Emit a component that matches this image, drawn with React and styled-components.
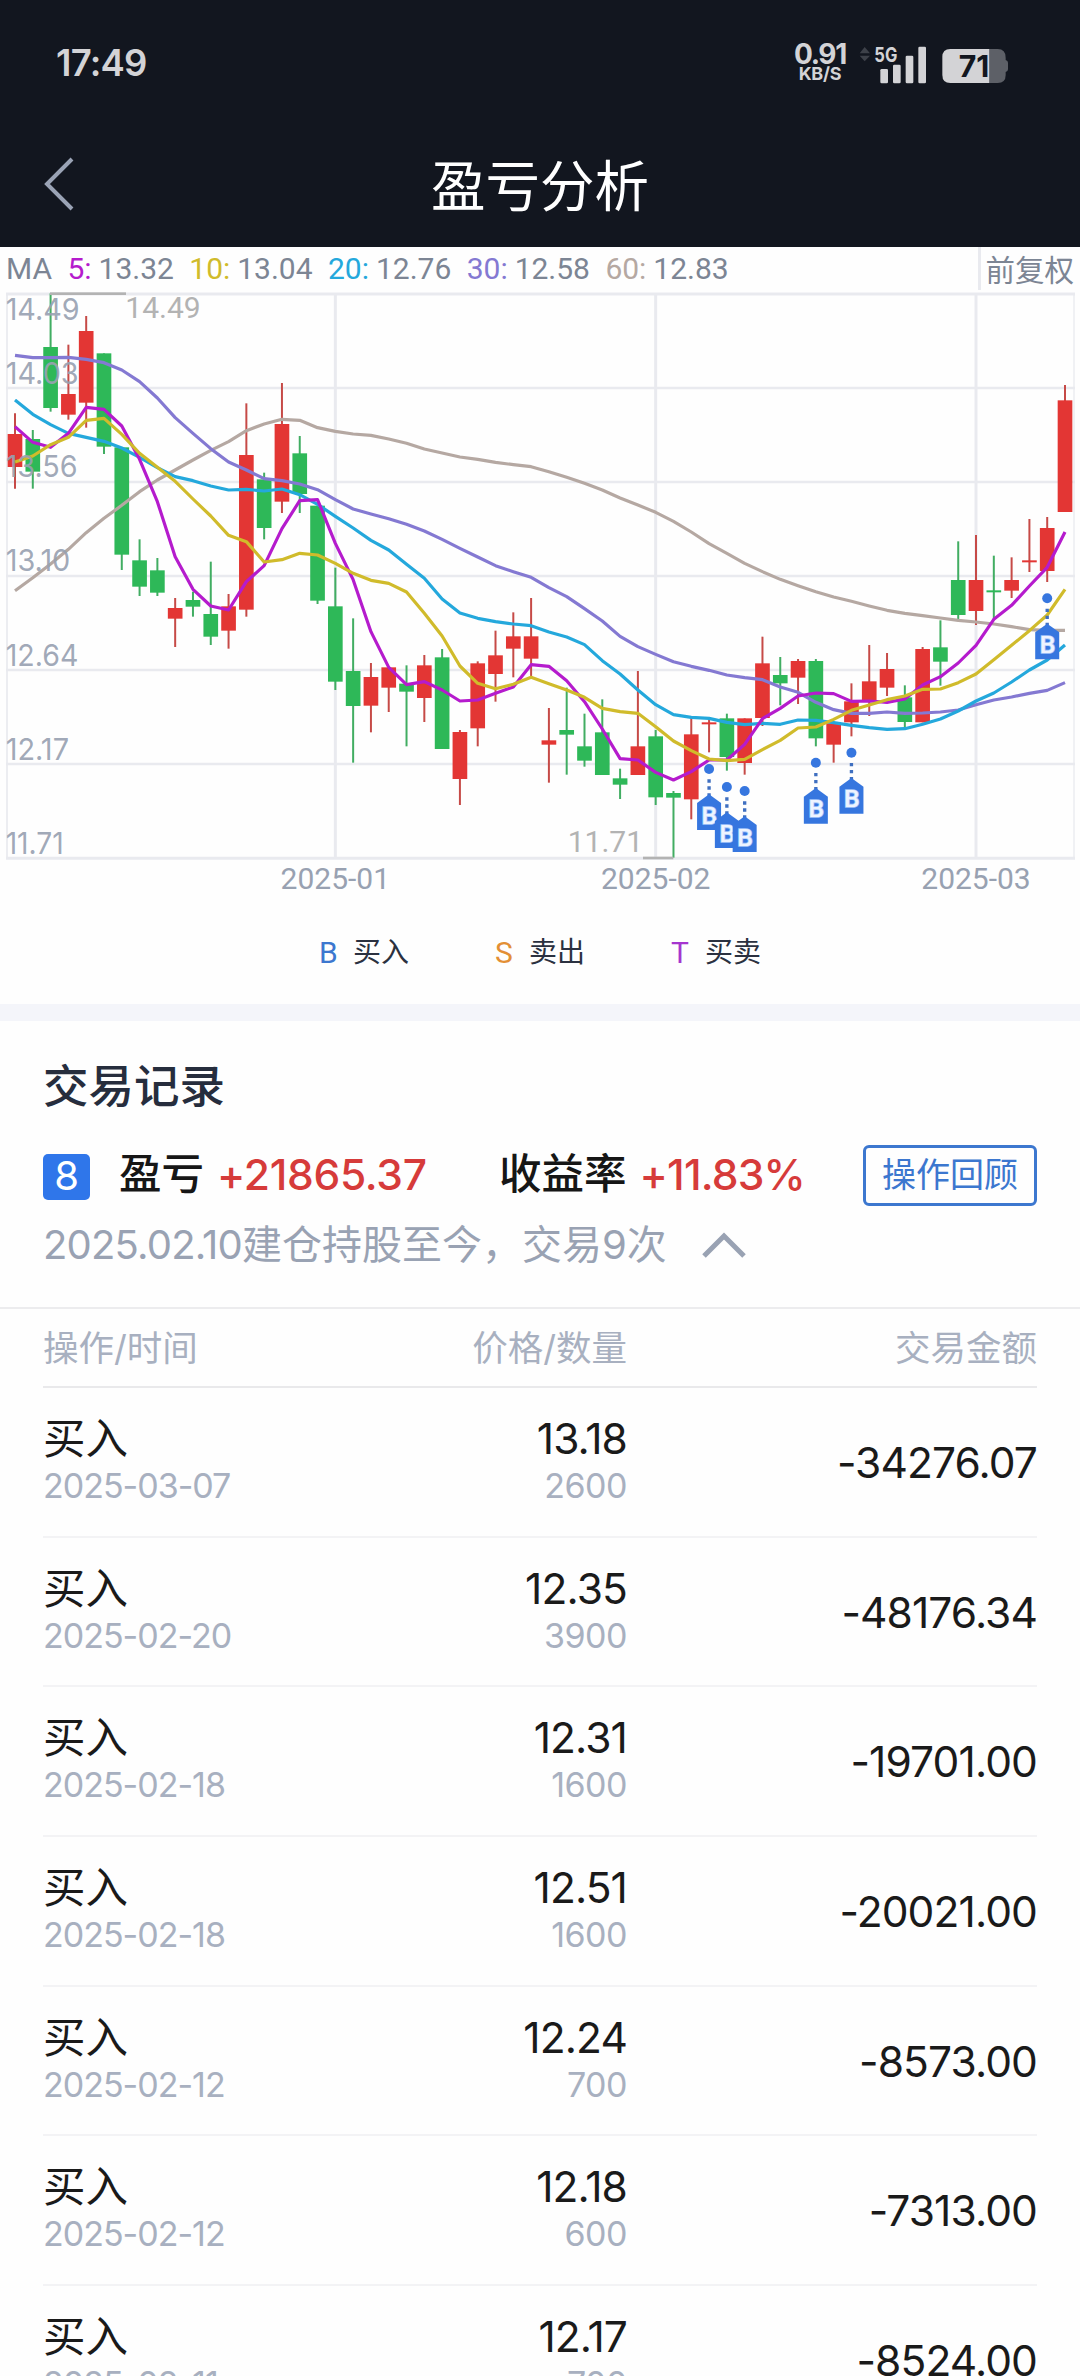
import React from 'react';
import styled, { createGlobalStyle } from 'styled-components';

const GlobalStyle = createGlobalStyle`
  * {
    box-sizing: border-box;
  }

  body {
    margin: 0;
    width: 1080px;
    height: 2376px;
    overflow: hidden;
    background: #fefefe;
    font-family: Inter, 'Noto Sans CJK SC', sans-serif;
  }
`;

const Screen = styled.div`
  width: 1080px;
  height: 2376px;
  overflow: hidden;
  display: flex;
  flex-direction: column;
`;

const Header = styled.header`
  flex: none;
  height: 247px;
  background: #12161f;
`;

const StatusBar = styled.div`
  height: 125px;
  padding: 0 71px 0 56px;
  display: flex;
  align-items: center;
  justify-content: space-between;
`;

const Clock = styled.div`
  font-size: 36.5px;
  font-weight: 600;
  letter-spacing: -0.8px;
  color: #d3d3d6;
`;

const StatusRight = styled.div`
  display: flex;
  align-items: center;
  gap: 12px;
`;

const NetSpeed = styled.div`
  display: flex;
  flex-direction: column;
  align-items: center;
  font-weight: 700;
  color: #d3d3d6;
`;

const SpeedValue = styled.span`
  font-size: 28px;
  line-height: 22px;
  letter-spacing: -1.3px;
`;

const SpeedUnit = styled.span`
  font-size: 18px;
  line-height: 18px;
  letter-spacing: -0.3px;
`;

const NavBar = styled.div`
  height: 122px;
  padding: 0 42px;
  display: grid;
  grid-template-columns: 60px 1fr 60px;
  align-items: center;
`;

const BackIcon = styled.svg`
  width: 34px;
  height: 56px;
  margin-bottom: 5px;
`;

const NavTitle = styled.h1`
  margin: 0;
  font-size: 54.5px;
  font-weight: 400;
  line-height: 60px;
  text-align: center;
  color: #ffffff;
`;

const AverageBar = styled.div`
  flex: none;
  height: 43px;
  padding-left: 6px;
  display: flex;
  align-items: center;
  font-family: Roboto, sans-serif;
  font-size: 30px;
  line-height: 45px;
  word-spacing: -0.5px;
  color: #7c8594;
`;

const AverageItem = styled.span`
  margin-left: 15.4px;
  white-space: pre;
`;

const AverageLabel = styled.span`
  color: ${(props) => props.$color};
`;

const AdjustMode = styled.span`
  height: 43px;
  margin-left: auto;
  padding: 0 6px 0 4px;
  border-left: 3px solid #e9eaef;
  font-family: 'Noto Sans CJK SC', sans-serif;
  font-size: 29.5px;
  line-height: 43px;
`;

const ChartSvg = styled.svg`
  flex: none;
  display: block;
  width: 1080px;
  height: 610px;
`;

const Legend = styled.div`
  flex: none;
  height: 104px;
  padding-left: 319px;
  display: flex;
  align-items: center;
  font-size: 28px;
  line-height: 42px;
  color: #2b3140;
`;

const LegendItem = styled.div`
  width: 176px;
  display: flex;
`;

const LegendMark = styled.span`
  width: 34px;
  padding-top: 1px;
  font-family: Roboto, sans-serif;
  font-size: 30px;
  color: ${(props) => props.$color};
`;

const Divider = styled.div`
  flex: none;
  height: 17px;
  background: #f4f5fa;
`;

const Summary = styled.section`
  flex: none;
  height: 288px;
  padding: 38px 43px 0;
  border-bottom: 2px solid #ececee;
`;

const SectionTitle = styled.h2`
  margin: 0;
  font-size: 45.5px;
  font-weight: 500;
  line-height: 56px;
  color: #262d3d;
`;

const ProfitRow = styled.div`
  height: 60px;
  margin-top: 30px;
  display: flex;
  align-items: center;
  font-size: 42.5px;
  font-weight: 500;
  line-height: 60px;
  color: #161616;
`;

const Badge = styled.span`
  width: 47px;
  height: 46px;
  margin: 4px 29px 0 0;
  border-radius: 5px;
  background: #2f76ea;
  font-size: 40px;
  font-weight: 400;
  line-height: 44px;
  text-align: center;
  color: #ffffff;
`;

const Figure = styled.span`
  width: ${(props) => props.$width}px;
  padding-bottom: 3px;
  display: flex;
  align-items: center;
  white-space: nowrap;
`;

const Gain = styled.span`
  margin-left: 13px;
  padding-top: 2px;
  letter-spacing: ${(props) => props.$tracking}px;
  color: #d63b3a;
`;

const ReviewButton = styled.button`
  width: 174px;
  height: 61px;
  margin-left: auto;
  padding: 0;
  border: 3px solid #3c77cf;
  border-radius: 6px;
  background: none;
  font-family: inherit;
  font-size: 34px;
  line-height: 50px;
  color: #3c77cf;
`;

const PositionNote = styled.div`
  margin-top: 11px;
  display: flex;
  align-items: center;
  gap: 34px;
  font-size: 40px;
  line-height: 58px;
  color: #99a2b3;
`;

const NoteText = styled.span`
  letter-spacing: ${(props) => props.$tracking || 0}px;
`;

const Records = styled.section`
  padding: 0 43px;
`;

const RecordGrid = styled.div`
  display: grid;
  grid-template-columns: 280px 304px 410px;
`;

const RecordHead = styled(RecordGrid)`
  height: 79px;
  padding-bottom: 4px;
  align-items: center;
  border-bottom: 2px solid #e9e9eb;
  font-size: 35.5px;
  color: #a8b0c0;
`;

const RecordRow = styled(RecordGrid)`
  height: 149.7px;
  padding-top: 24px;
  border-bottom: 2px solid #f3f3f5;
`;

const Cell = styled.div`
  text-align: ${(props) => props.$align || 'left'};
`;

const Primary = styled.div`
  font-size: 42.5px;
  line-height: 54px;
  letter-spacing: ${(props) => props.$tracking || 0}px;
  color: #1a1a1a;
`;

const Secondary = styled.div`
  font-size: 34px;
  line-height: 40px;
  letter-spacing: ${(props) => props.$tracking || 0}px;
  color: #a8b0c0;
`;

const Amount = styled(Primary)`
  line-height: 101px;
`;

// The chart is plotted on a grid of three units per pixel.
const STEP = 53.39;
const candleX = (index) => 45 + index * STEP;

// [rising, high, body top, body bottom, low]
const candles = [
  [1, 520, 582, 681, 746], [0, 570, 597, 695, 746], [0, 160, 321, 504, 515], [1, 314, 462, 524, 539],
  [1, 228, 273, 488, 563], [0, 340, 340, 620, 642], [0, 622, 622, 944, 990], [0, 898, 961, 1040, 1068],
  [0, 954, 991, 1058, 1068], [1, 1074, 1104, 1136, 1221], [0, 1055, 1080, 1100, 1130], [0, 965, 1122, 1190, 1215],
  [1, 1062, 1099, 1172, 1226], [1, 490, 645, 1109, 1130], [0, 698, 718, 864, 898], [1, 429, 552, 785, 819],
  [0, 588, 640, 762, 819], [0, 797, 797, 1082, 1092], [0, 983, 1099, 1325, 1350], [0, 1135, 1293, 1398, 1568],
  [1, 1269, 1311, 1397, 1477], [1, 1282, 1282, 1343, 1416], [0, 1276, 1331, 1355, 1519], [1, 1245, 1276, 1374, 1446],
  [0, 1227, 1252, 1527, 1527], [1, 1470, 1476, 1617, 1695], [1, 1264, 1270, 1465, 1519], [1, 1172, 1246, 1302, 1385],
  [1, 1117, 1189, 1226, 1312], [1, 1074, 1189, 1256, 1312], [1, 1404, 1501, 1514, 1628], [0, 1343, 1470, 1484, 1604],
  [0, 1421, 1519, 1562, 1580], [0, 1378, 1477, 1605, 1605], [0, 1586, 1615, 1634, 1677], [1, 1293, 1519, 1605, 1605],
  [0, 1470, 1489, 1672, 1695], [0, 1653, 1659, 1673, 1853], [1, 1432, 1483, 1678, 1738], [1, 1438, 1447, 1453, 1537],
  [0, 1421, 1435, 1551, 1592], [1, 1435, 1435, 1569, 1604], [1, 1190, 1270, 1434, 1458], [0, 1251, 1305, 1330, 1396],
  [1, 1257, 1263, 1313, 1392], [0, 1257, 1263, 1495, 1519], [1, 1445, 1450, 1514, 1568], [1, 1330, 1384, 1447, 1489],
  [1, 1215, 1324, 1384, 1428], [1, 1239, 1287, 1343, 1368], [0, 1336, 1372, 1446, 1465], [1, 1221, 1227, 1447, 1447],
  [0, 1141, 1222, 1265, 1337], [0, 904, 1020, 1125, 1137], [1, 885, 1020, 1113, 1155], [0, 947, 1051, 1057, 1137],
  [1, 952, 1020, 1052, 1074], [1, 837, 961, 967, 996], [1, 831, 864, 993, 1026], [1, 435, 481, 816, 816],
];

const averages = [
  {
    label: '60:',
    value: '12.83',
    color: '#b5a8a2',
    points: [
      1052, 1013, 972, 928, 878, 835, 796, 755, 720, 690, 660, 631, 605, 572, 552, 538, 541, 563, 574, 582,
      586, 597, 610, 627, 639, 651, 658, 667, 674, 680, 695, 712, 730, 750, 774, 795, 817, 844, 876, 911,
      940, 970, 995, 1018, 1037, 1055, 1071, 1084, 1098, 1111, 1120, 1127, 1134, 1141, 1146, 1152, 1160, 1169, 1171, 1171,
    ],
  },
  {
    label: '30:',
    value: '12.58',
    color: '#8479d2',
    points: [
      346, 353, 353, 352, 358, 368, 390, 425, 474, 533, 580, 626, 666, 690, 716, 722, 732, 749, 779, 807,
      822, 836, 853, 873, 898, 925, 951, 977, 995, 1012, 1043, 1070, 1106, 1143, 1189, 1220, 1243, 1265, 1279, 1291,
      1305, 1313, 1319, 1341, 1357, 1387, 1409, 1420, 1420, 1416, 1420, 1419, 1416, 1410, 1394, 1380, 1371, 1360, 1351, 1328,
    ],
  },
  {
    label: '20:',
    value: '12.76',
    color: '#24a8dc',
    points: [
      480, 523, 554, 580, 592, 604, 624, 652, 683, 710, 722, 738, 750, 748, 753, 747, 764, 793, 829, 864,
      901, 930, 973, 1015, 1077, 1119, 1135, 1145, 1152, 1157, 1176, 1191, 1214, 1262, 1302, 1350, 1394, 1424, 1432, 1435,
      1447, 1454, 1450, 1453, 1440, 1441, 1448, 1456, 1463, 1468, 1466, 1453, 1437, 1413, 1383, 1359, 1326, 1290, 1260, 1215,
    ],
  },
  {
    label: '5:',
    value: '13.32',
    color: '#b51bcd',
    points: [
      560, 607, 622, 580, 502, 508, 558, 658, 785, 950, 1048, 1098, 1110, 1025, 977, 866, 782, 779, 910, 1019,
      1175, 1282, 1334, 1325, 1350, 1383, 1380, 1360, 1341, 1274, 1279, 1322, 1385, 1467, 1556, 1560, 1597, 1620, 1595, 1560,
      1560, 1513, 1436, 1405, 1368, 1359, 1361, 1384, 1383, 1387, 1377, 1335, 1310, 1269, 1216, 1138, 1096, 1038, 982, 876,
    ],
  },
  {
    label: '10:',
    value: '13.04',
    color: '#d0bb2b',
    points: [
      666, 648, 614, 592, 541, 535, 583, 640, 682, 724, 777, 828, 886, 905, 966, 959, 940, 945, 970, 1000,
      1021, 1030, 1056, 1120, 1188, 1278, 1330, 1346, 1333, 1312, 1331, 1350, 1372, 1405, 1415, 1420, 1460, 1503, 1532, 1557,
      1562, 1558, 1529, 1501, 1464, 1461, 1438, 1411, 1395, 1379, 1368, 1348, 1347, 1328, 1302, 1259, 1216, 1172, 1125, 1048,
    ],
  },
];

const legendOrder = ['5:', '10:', '20:', '30:', '60:'];

const priceLabels = [
  { text: '14.49', y: 240, length: 216 },
  { text: '14.03', y: 431, length: 213 },
  { text: '13.56', y: 712, length: 210 },
  { text: '13.10', y: 994, length: 188 },
  { text: '12.64', y: 1278, length: 212 },
  { text: '12.17', y: 1559, length: 184 },
  { text: '11.71', y: 1841, length: 168 },
];

const months = [
  { text: '2025-01', x: 1006 },
  { text: '2025-02', x: 1967 },
  { text: '2025-03', x: 2928 },
];

// candle index and height of the dot of every buy
const buys = [
  [39, 1587], [40, 1641], [41, 1653], [45, 1568], [47, 1538], [58, 1075],
];

const records = [
  { date: '2025-03-07', price: '13.18', quantity: '2600', amount: '-34276.07' },
  { date: '2025-02-20', price: '12.35', quantity: '3900', amount: '-48176.34' },
  { date: '2025-02-18', price: '12.31', quantity: '1600', amount: '-19701.00' },
  { date: '2025-02-18', price: '12.51', quantity: '1600', amount: '-20021.00' },
  { date: '2025-02-12', price: '12.24', quantity: '700', amount: '-8573.00' },
  { date: '2025-02-12', price: '12.18', quantity: '600', amount: '-7313.00' },
  { date: '2025-02-11', price: '12.17', quantity: '700', amount: '-8524.00' },
];

const StatusIcons = () => (
  <svg width="151" height="42" viewBox="0 0 453 126">
    <g fill="#3d4149">
      <path d="M5 34 L20 15 L36 34 Z" />
      <path d="M5 41 L20 58 L36 41 Z" />
    </g>
    <g fill="#d3d3d6">
      <rect x="67" y="81" width="23" height="43" rx="4" />
      <rect x="105" y="68" width="23" height="56" rx="4" />
      <rect x="143" y="41" width="23" height="83" rx="4" />
      <rect x="181" y="14" width="23" height="110" rx="4" />
      <text x="49" y="59" textLength="69" lengthAdjust="spacingAndGlyphs" fontSize="62" fontWeight="700">5G</text>
    </g>
    <path d="M394 21 H419 Q443 21 443 47 V54 Q450 56 450 62 V82 Q450 88 443 90 V99 Q443 123 419 123 H394 Z" fill="#5d6067" />
    <path d="M277 21 H394 V123 H277 Q253 123 253 99 V45 Q253 21 277 21 Z" fill="#d3d3d6" />
    <text x="302" y="105" textLength="92" lengthAdjust="spacingAndGlyphs" fontSize="89" fontWeight="700" fill="#12161f">71</text>
  </svg>
);

const BuyMarker = ({ x, y }) => (
  <g transform={`translate(${x} ${y})`}>
    <circle r="15" fill="#3676df" />
    <path d="M0 31 V82" stroke="#3f6fc0" strokeWidth="10" strokeDasharray="10 11" />
    <path d="M0 76 L36 102 V183 H-36 V102 Z" fill="#3676df" />
    <text
      x="1"
      y="164"
      fontFamily="Roboto"
      fontSize="74"
      fontWeight="500"
      fill="#eef4ff"
      stroke="#a5c6fa"
      strokeWidth="5"
      paintOrder="stroke"
      textAnchor="middle"
    >
      B
    </text>
  </g>
);

const PriceChart = () => (
  <ChartSvg viewBox="0 150 3240 1830">
    <g stroke="#e9eaef" strokeWidth="9">
      {[162, 444, 726, 1008, 1290, 1572, 1855].map((y) => (
        <line key={y} x1="18" x2="3225" y1={y} y2={y} strokeWidth={y === 162 || y === 1855 ? 9 : 8} />
      ))}
      {months.map(({ x }) => (
        <line key={x} x1={x} x2={x} y1="162" y2="1855" />
      ))}
      <line x1="21" x2="21" y1="162" y2="1855" strokeWidth="5" />
      <line x1="3222" x2="3222" y1="162" y2="1855" strokeWidth="4" />
    </g>

    {candles.map(([rising, high, top, bottom, low], index) => (
      <g key={index}>
        <line
          x1={candleX(index)}
          x2={candleX(index)}
          y1={high}
          y2={low}
          stroke={rising ? '#c64a47' : '#41ad62'}
          strokeWidth="6"
        />
        <rect x={candleX(index) - 22} y={top} width="44" height={bottom - top} fill={rising ? '#e33634' : '#2eb858'} />
      </g>
    ))}

    {averages.map(({ label, color, points }) => (
      <polyline
        key={label}
        points={points.map((y, index) => `${candleX(index)},${y}`).join(' ')}
        fill="none"
        stroke={color}
        strokeWidth="9.5"
        strokeLinejoin="round"
      />
    ))}

    <g fill="#b3b3b3" fontFamily="Roboto" fontSize="90">
      <rect x="150" y="157" width="228" height="8" />
      <text x="376" y="235">14.49</text>
      <rect x="1929" y="1850" width="91" height="8" />
      <text x="1703" y="1837">11.71</text>
    </g>

    <g fill="#98a1b1" fillOpacity="0.92" fontSize="91">
      {priceLabels.map(({ text, y, length }) => (
        <text key={text} x="17" y={y} textLength={length + 6} lengthAdjust="spacingAndGlyphs">{text}</text>
      ))}
    </g>

    <g fill="#98a1b1" fontFamily="Roboto" fontSize="90" textAnchor="middle">
      {months.map(({ text, x }) => (
        <text key={text} x={x} y="1946">{text}</text>
      ))}
    </g>

    {buys.map(([index, y]) => (
      <BuyMarker key={index} x={candleX(index)} y={y} />
    ))}
  </ChartSvg>
);

const App = () => {
  return (
    <Screen>
      <GlobalStyle />
      <Header>
        <StatusBar>
          <Clock>17:49</Clock>
          <StatusRight>
            <NetSpeed>
              <SpeedValue>0.91</SpeedValue>
              <SpeedUnit>KB/S</SpeedUnit>
            </NetSpeed>
            <StatusIcons />
          </StatusRight>
        </StatusBar>
        <NavBar>
          <BackIcon viewBox="0 0 34 56" fill="none" stroke="#9aa3b5" strokeWidth="4">
            <path d="M30 3 L5 28 L30 53" />
          </BackIcon>
          <NavTitle>盈亏分析</NavTitle>
        </NavBar>
      </Header>

      <AverageBar>
        <span>MA</span>
        {legendOrder.map((label) => {
          const average = averages.find((item) => item.label === label);
          return (
            <AverageItem key={label}>
              <AverageLabel $color={average.color}>{label}</AverageLabel> {average.value}
            </AverageItem>
          );
        })}
        <AdjustMode>前复权</AdjustMode>
      </AverageBar>
      <PriceChart />
      <Legend>
        <LegendItem><LegendMark $color="#3c77cf">B</LegendMark>买入</LegendItem>
        <LegendItem><LegendMark $color="#e38f35">S</LegendMark>卖出</LegendItem>
        <LegendItem><LegendMark $color="#a535cf">T</LegendMark>买卖</LegendItem>
      </Legend>

      <Divider />

      <Summary>
        <SectionTitle>交易记录</SectionTitle>
        <ProfitRow>
          <Badge>8</Badge>
          <Figure $width={380}>盈亏<Gain $tracking={-0.3}>+21865.37</Gain></Figure>
          <Figure $width={310}>收益率<Gain $tracking={-0.8}>+11.83%</Gain></Figure>
          <ReviewButton>操作回顾</ReviewButton>
        </ProfitRow>
        <PositionNote>
          <span><NoteText $tracking={-0.8}>2025.02.10</NoteText>建仓持股至今，交易9次</span>
          <svg width="46" height="28" viewBox="0 0 46 28" fill="none" stroke="#99a2b3" strokeWidth="5">
            <path d="M3 25 L23 5 L43 25" />
          </svg>
        </PositionNote>
      </Summary>

      <Records>
        <RecordHead>
          <Cell>操作/时间</Cell>
          <Cell $align="right">价格/数量</Cell>
          <Cell $align="right">交易金额</Cell>
        </RecordHead>
        {records.map(({ date, price, quantity, amount }, index) => (
          <RecordRow key={index}>
            <Cell>
              <Primary>买入</Primary>
              <Secondary $tracking={-1}>{date}</Secondary>
            </Cell>
            <Cell $align="right">
              <Primary $tracking={-0.9}>{price}</Primary>
              <Secondary $tracking={-0.5}>{quantity}</Secondary>
            </Cell>
            <Cell $align="right">
              <Amount $tracking={-0.9}>{amount}</Amount>
            </Cell>
          </RecordRow>
        ))}
      </Records>
    </Screen>
  );
};

export default App;
